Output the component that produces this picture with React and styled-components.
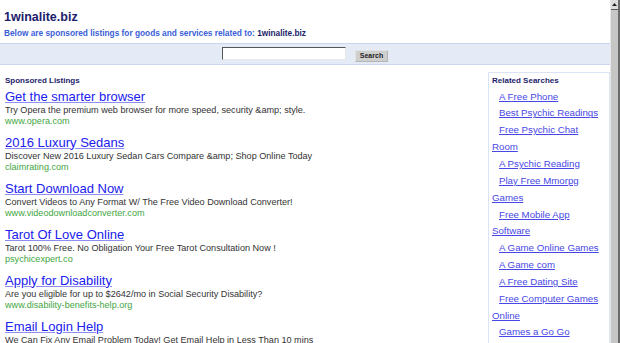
import React from 'react';
import styled, { createGlobalStyle } from 'styled-components';

const GlobalStyle = createGlobalStyle`
  html, body {
    margin: 0;
    padding: 0;
    background: #fff;
    font-family: "Liberation Sans", Arial, sans-serif;
  }
`;

const Window = styled.div`
  display: flex;
  width: 620px;
  height: 343px;
  overflow: hidden;
`;

const Page = styled.div`
  flex: 1;
  min-width: 0;
  display: flex;
  flex-direction: column;
`;

const Header = styled.div`
  padding: 10px 4px 0;
`;

const SiteTitle = styled.div`
  font-size: 12.5px;
  line-height: 15px;
  font-weight: bold;
  color: #1c1c6b;
`;

const SubTitle = styled.div`
  margin-top: 3px;
  font-size: 8.3px;
  line-height: 10px;
  font-weight: bold;
  color: #3a5ed8;
  white-space: nowrap;

  b {
    color: #1c1c6b;
  }
`;

const SearchBand = styled.form`
  margin-top: 5px;
  height: 20px;
  background: #e4ebf7;
  border-top: 1px solid #c9d7f0;
  border-bottom: 1px solid #c9d7f0;
  display: flex;
  align-items: center;
  justify-content: center;
  gap: 9px;
`;

const SearchInput = styled.input`
  box-sizing: border-box;
  width: 124px;
  height: 13px;
  margin: 0 0 1px;
  padding: 0;
  background: #fff;
  border: 1px solid #e8e8e8;
  border-top-color: #555;
  border-left-color: #555;
  outline: none;
`;

const SearchButton = styled.button`
  box-sizing: border-box;
  width: 33px;
  height: 12px;
  margin-top: 3px;
  padding: 0;
  background: #cfcfcf;
  border: 1px solid #e2e2e2;
  border-right-color: #b4b4b4;
  border-bottom-color: #b4b4b4;
  font-family: "Liberation Sans", Arial, sans-serif;
  font-size: 7px;
  font-weight: bold;
  color: #222;
`;

const Content = styled.div`
  display: flex;
  margin-top: 7px;
  flex: 1;
  min-height: 0;
`;

const Listings = styled.div`
  flex: 1;
  padding: 4px 0 0 5px;
`;

const SectionLabel = styled.div`
  font-size: 8px;
  line-height: 10px;
  font-weight: bold;
  color: #1c1c6b;
`;

const Listing = styled.div`
  margin-top: ${(p) => (p.$first ? '2.5px' : '8px')};
`;

const AdTitle = styled.a`
  display: block;
  width: max-content;
  font-size: 13px;
  line-height: 16px;
  color: #2020ee;
  text-decoration: underline;
  text-decoration-color: #8e8ef2;
`;

const AdText = styled.div`
  font-size: 9.1px;
  line-height: 11px;
  color: #333;
  white-space: nowrap;
`;

const AdUrl = styled.div`
  font-size: 9.1px;
  line-height: 11px;
  color: #3fa63f;
`;

const Sidebar = styled.div`
  box-sizing: border-box;
  width: 122px;
  border: 1px solid #dbe4f5;
  border-bottom: none;
  padding: 3px 6px 0 3px;
`;

const RelatedList = styled.div`
  margin-top: 2.6px;
`;

const RelatedItem = styled.div`
  text-indent: 7px;
  font-size: 9.7px;
  line-height: 16.85px;

  a {
    color: #4747e6;
    text-decoration: underline;
  }
`;

const Scrollbar = styled.div`
  width: 10px;
  height: 343px;
  display: flex;
  flex-direction: column;
  background: #c6c6c6;
  border-left: 1px solid #e6e6e6;
  box-sizing: border-box;
  box-shadow: inset -2px 0 0 #6a6a6a;
`;

const ScrollArrow = styled.div`
  height: 9px;
  background: #dcdcdc;
  border-bottom: 1px solid #5a5a5a;
  display: flex;
  align-items: center;
  justify-content: center;
  margin-right: 2px;
`;

const ads = [
  {
    title: 'Get the smarter browser',
    text: 'Try Opera the premium web browser for more speed, security &amp; style.',
    url: 'www.opera.com',
  },
  {
    title: '2016 Luxury Sedans',
    text: 'Discover New 2016 Luxury Sedan Cars Compare &amp; Shop Online Today',
    url: 'claimrating.com',
  },
  {
    title: 'Start Download Now',
    text: 'Convert Videos to Any Format W/ The Free Video Download Converter!',
    url: 'www.videodownloadconverter.com',
  },
  {
    title: 'Tarot Of Love Online',
    text: 'Tarot 100% Free. No Obligation Your Free Tarot Consultation Now !',
    url: 'psychicexpert.co',
  },
  {
    title: 'Apply for Disability',
    text: 'Are you eligible for up to $2642/mo in Social Security Disability?',
    url: 'www.disability-benefits-help.org',
  },
  {
    title: 'Email Login Help',
    text: 'We Can Fix Any Email Problem Today! Get Email Help in Less Than 10 mins',
    url: 'www.emailloginhelp.com',
  },
];

const related = [
  'A Free Phone',
  'Best Psychic Readings',
  'Free Psychic Chat Room',
  'A Psychic Reading',
  'Play Free Mmorpg Games',
  'Free Mobile App Software',
  'A Game Online Games',
  'A Game com',
  'A Free Dating Site',
  'Free Computer Games Online',
  'Games a Go Go',
];

export default function App() {
  return (
    <Window>
      <GlobalStyle />
      <Page>
        <Header>
          <SiteTitle>1winalite.biz</SiteTitle>
          <SubTitle>
            Below are sponsored listings for goods and services related to: <b>1winalite.biz</b>
          </SubTitle>
        </Header>
        <SearchBand onSubmit={(e) => e.preventDefault()}>
          <SearchInput type="text" />
          <SearchButton type="submit">Search</SearchButton>
        </SearchBand>
        <Content>
          <Listings>
            <SectionLabel>Sponsored Listings</SectionLabel>
            {ads.map((ad, i) => (
              <Listing key={ad.title} $first={i === 0}>
                <AdTitle href="#">{ad.title}</AdTitle>
                <AdText>{ad.text}</AdText>
                <AdUrl>{ad.url}</AdUrl>
              </Listing>
            ))}
          </Listings>
          <Sidebar>
            <SectionLabel>Related Searches</SectionLabel>
            <RelatedList>
              {related.map((r) => (
                <RelatedItem key={r}>
                  <a href="#">{r}</a>
                </RelatedItem>
              ))}
            </RelatedList>
          </Sidebar>
        </Content>
      </Page>
      <Scrollbar>
        <ScrollArrow>
          <svg width="5" height="3" viewBox="0 0 5 3">
            <path d="M2.5 0 L5 3 L0 3 Z" fill="#222" />
          </svg>
        </ScrollArrow>
      </Scrollbar>
    </Window>
  );
}
